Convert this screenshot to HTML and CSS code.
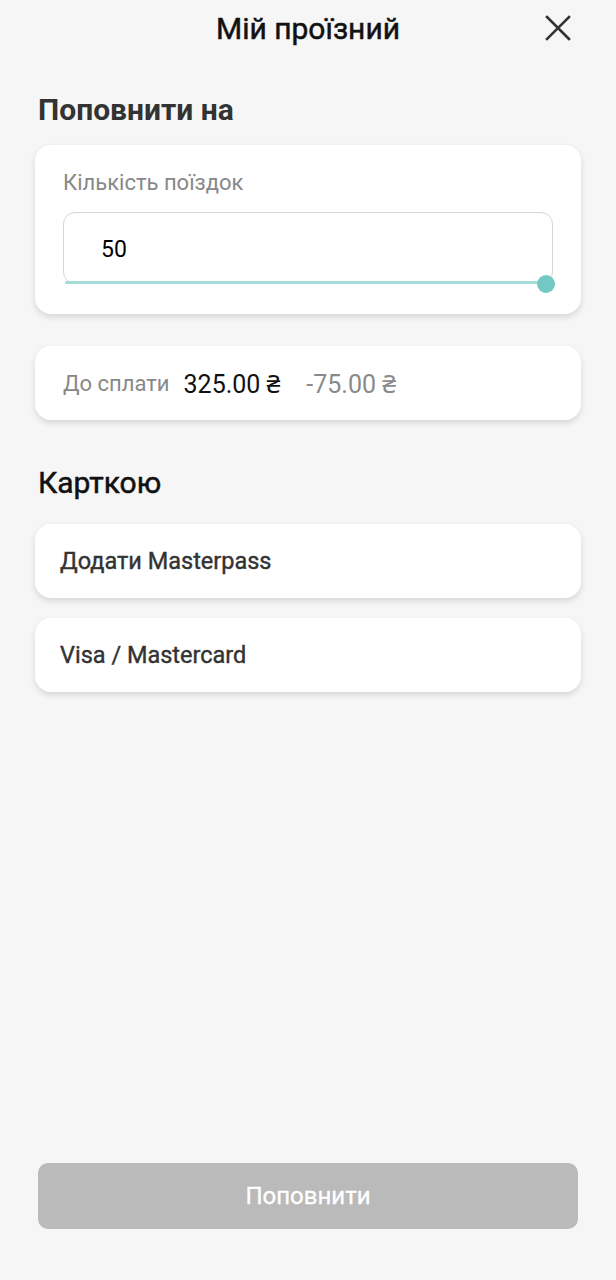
FILE: index.html
```html
<!DOCTYPE html>
<html lang="uk">
<head>
    <meta charset="UTF-8">
    <meta name="viewport" content="width=device-width, initial-scale=1.0">
    <title>Мій проїзний</title>
    <link rel="stylesheet" href="styles.css">
</head>
<body>
    <div class="page">
        <header class="top-bar">
            <span></span>
            <h1>Мій проїзний</h1>
            <button class="close-btn" aria-label="Закрити">
                <svg width="28" height="28" viewBox="0 0 28 28">
                    <path d="M3 3 L25 25 M25 3 L3 25" stroke="#333" stroke-width="2.6" stroke-linecap="square" fill="none"/>
                </svg>
            </button>
        </header>

        <main class="content">
            <h2 class="section-title">Поповнити на</h2>

            <div class="card trips-card">
                <p class="field-label">Кількість поїздок</p>
                <div class="trips-input">
                    <span class="trips-value">50</span>
                    <div class="slider-track"></div>
                    <div class="slider-thumb"></div>
                </div>
            </div>

            <div class="card total-card">
                <span class="total-label">До сплати</span>
                <span class="total-sum">325.00 ₴</span>
                <span class="total-discount">-75.00 ₴</span>
            </div>

            <h2 class="section-title section-title--card">Карткою</h2>

            <div class="card pay-option">Додати Masterpass</div>
            <div class="card pay-option">Visa / Mastercard</div>
        </main>

        <div class="footer">
            <button class="submit-btn" disabled>Поповнити</button>
        </div>
    </div>
</body>
</html>
```

FILE: styles.css
```css
body {
    margin: 0;
    background-color: #f6f6f6;
    font-family: Roboto, "Noto Sans", Arial, sans-serif;
    color: #111;
}
.page {
    min-height: 1280px;
    display: flex;
    flex-direction: column;
}
.top-bar {
    height: 56px;
    display: grid;
    grid-template-columns: 1fr auto 1fr;
    align-items: center;
}
.top-bar h1 {
    margin: 0;
    font-size: 30px;
    font-weight: 400;
    -webkit-text-stroke: 0.5px #111;
    color: #111;
}
.close-btn {
    justify-self: end;
    margin-right: 44px;
    padding: 0;
    border: none;
    background: none;
    width: 28px;
    height: 28px;
    display: flex;
}
.content {
    padding: 0 35px;
    display: flex;
    flex-direction: column;
}
.section-title {
    margin: 38px 0 19px 3px;
    font-size: 30px;
    line-height: 32px;
    font-weight: 700;
    color: #333;
}
.section-title--card {
    margin: 47px 0 25px 3px;
    font-size: 30px;
    font-weight: 400;
    -webkit-text-stroke: 0.5px #111;
    color: #111;
}
.card {
    background-color: #fff;
    border-radius: 16px;
    box-shadow: 0 3px 6px rgba(0, 0, 0, 0.13);
}
.trips-card {
    padding: 26px 28px 30px;
}
.field-label {
    margin: 0 0 17px;
    font-size: 22px;
    line-height: 24px;
    color: #888;
}
.trips-input {
    position: relative;
    height: 70px;
    border: 1px solid #d6d6d6;
    border-radius: 12px;
    display: flex;
    align-items: center;
    padding-left: 37px;
}
.trips-value {
    font-size: 23px;
    color: #000;
    margin-top: 2px;
}
.slider-track {
    position: absolute;
    left: 1px;
    right: 6px;
    bottom: -1px;
    height: 3px;
    background-color: #a6dcd8;
    border-radius: 2px;
}
.slider-thumb {
    position: absolute;
    right: -3px;
    bottom: -10px;
    width: 18px;
    height: 18px;
    border-radius: 50%;
    background-color: #74c8c4;
}
.total-card {
    margin-top: 32px;
    height: 74px;
    padding: 0 28px;
    display: flex;
    align-items: center;
}
.total-label {
    font-size: 22px;
    color: #888;
    margin-right: 14px;
}
.total-sum {
    font-size: 25px;
    color: #111;
    margin-right: 26px;
}
.total-discount {
    font-size: 25px;
    color: #8a8a8a;
}
.pay-option {
    height: 74px;
    padding: 0 25px;
    display: flex;
    align-items: center;
    font-size: 23.5px;
    font-weight: 400;
    -webkit-text-stroke: 0.4px #333;
    color: #333;
    margin-bottom: 20px;
}
.footer {
    margin-top: auto;
    padding: 0 38px 51px;
}
.submit-btn {
    width: 100%;
    height: 66px;
    border: none;
    border-radius: 10px;
    background-color: #bababa;
    color: #fff;
    font-family: inherit;
    font-size: 24px;
    font-weight: 400;
    -webkit-text-stroke: 0.3px #fff;
}
```
